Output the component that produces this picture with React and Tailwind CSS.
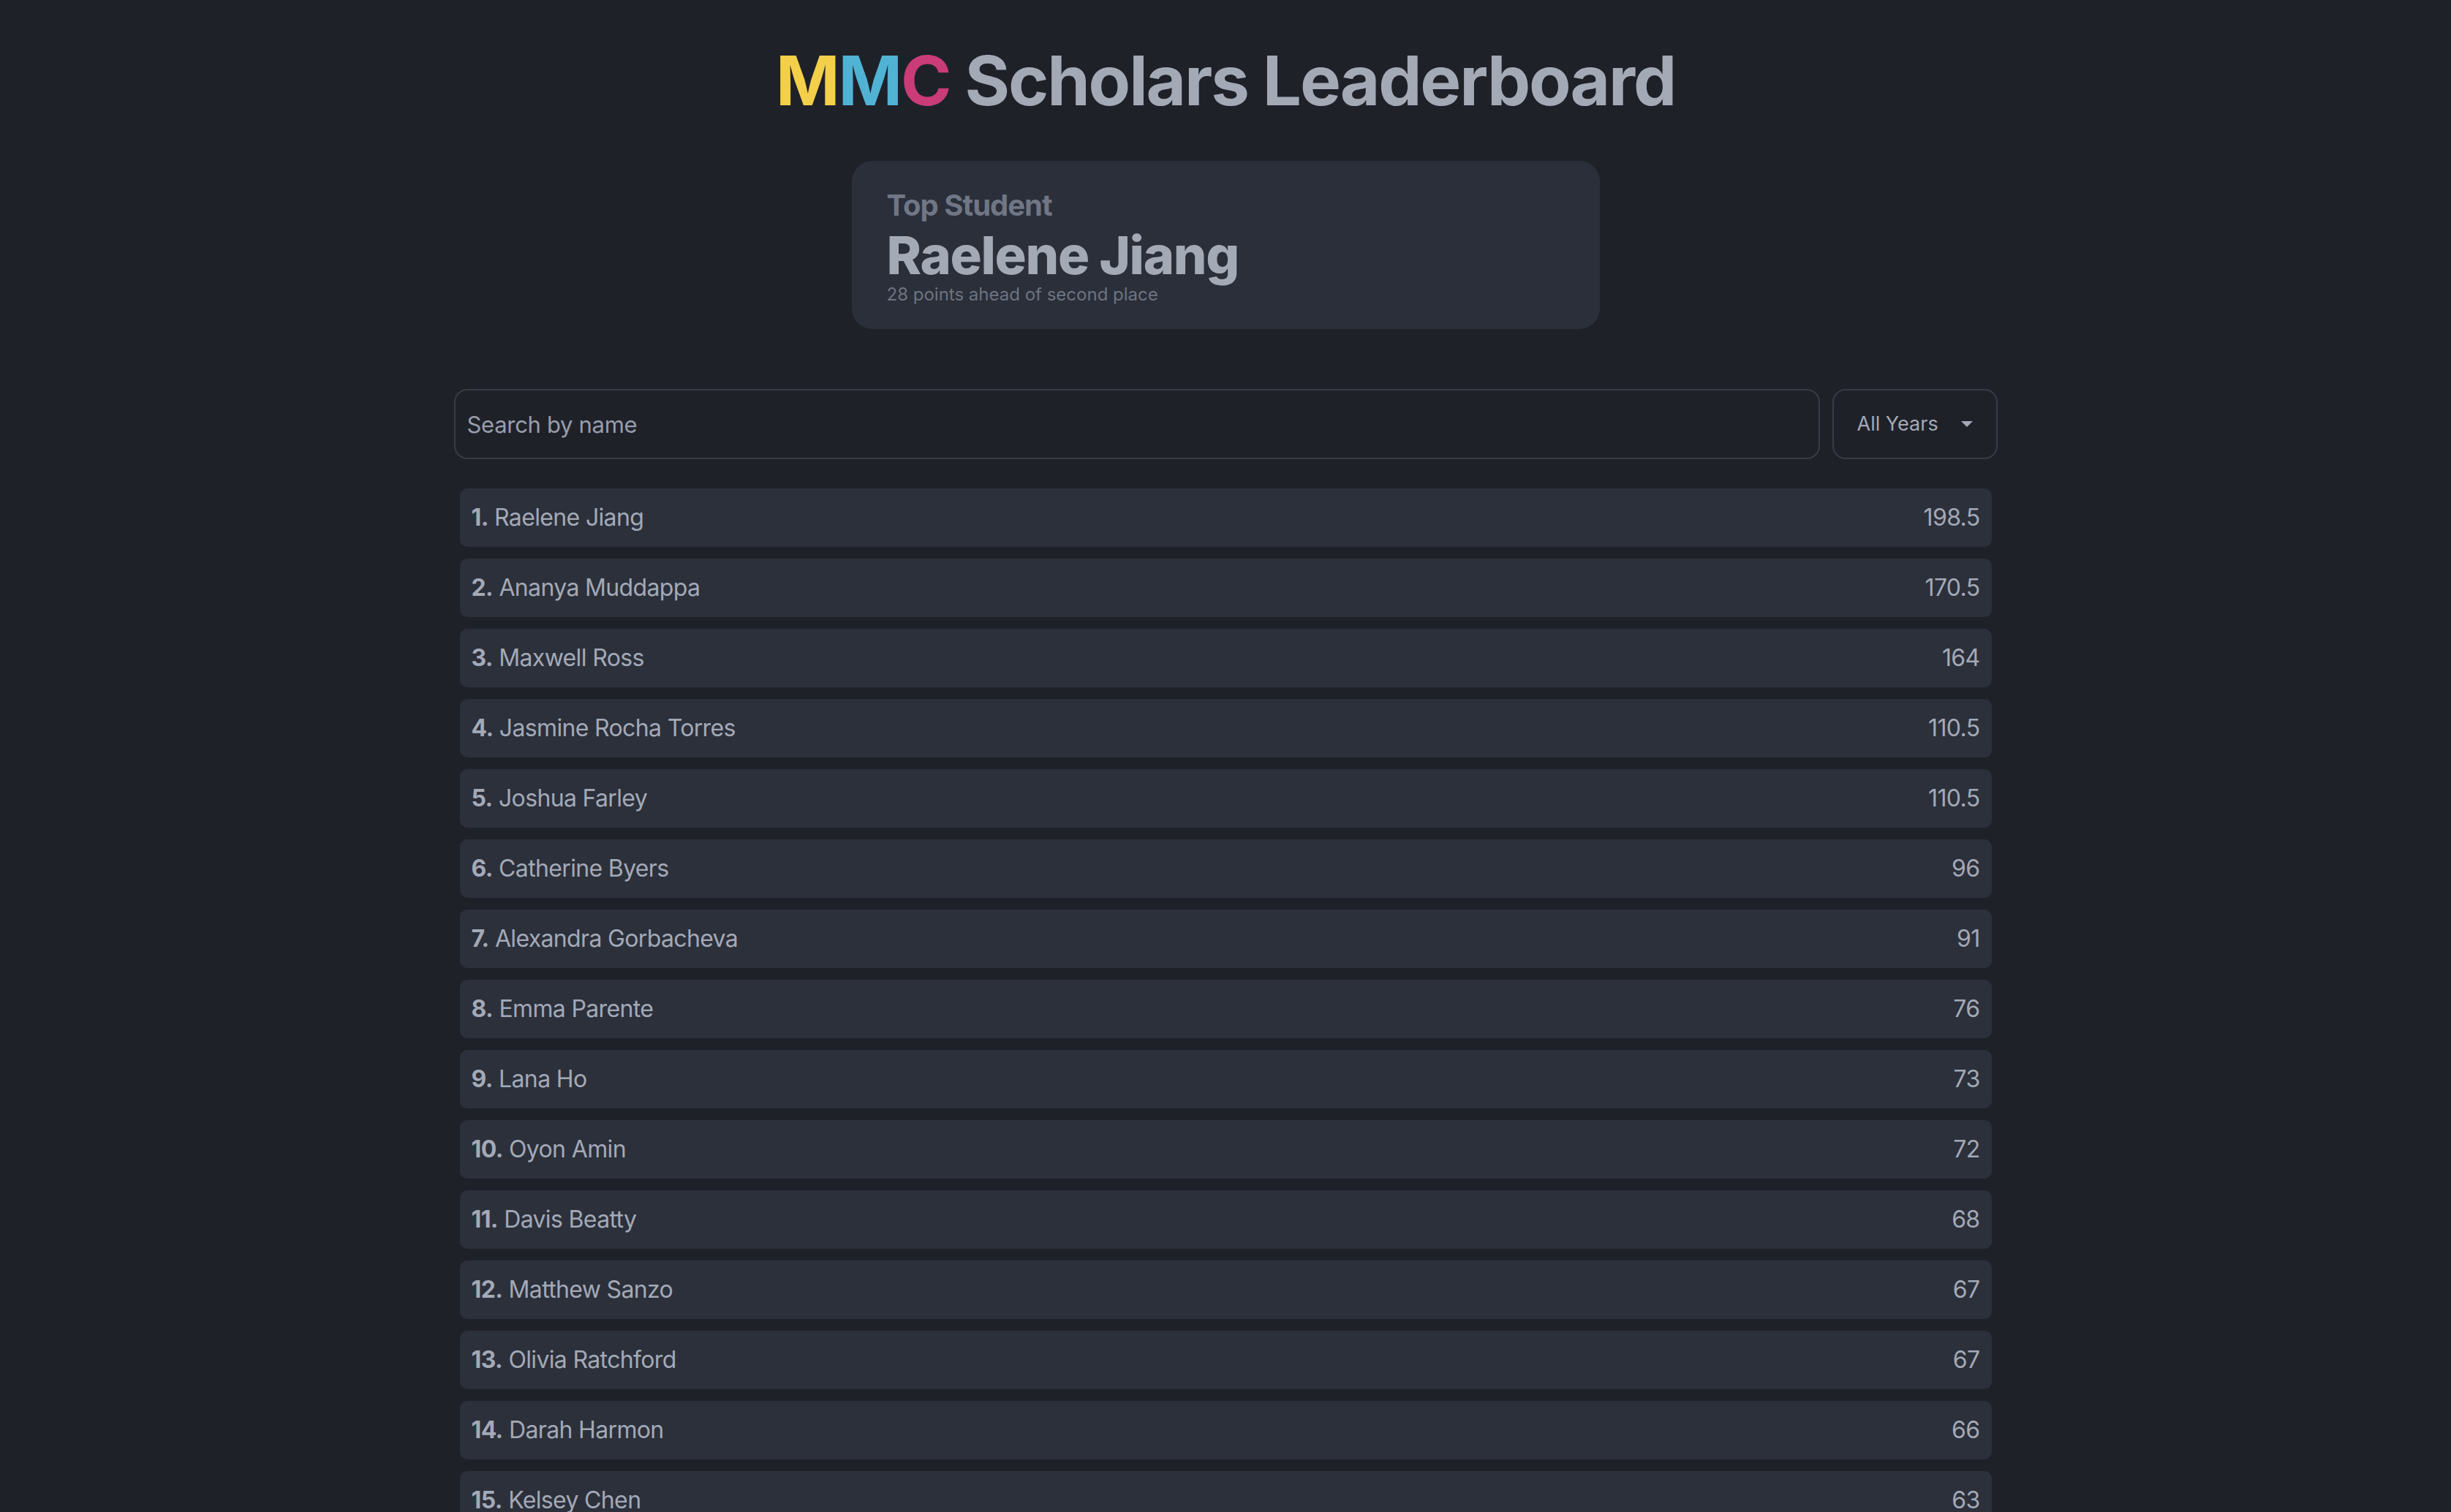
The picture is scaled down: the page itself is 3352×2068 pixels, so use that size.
import { useState } from "react";

const STUDENTS = [
  { name: "Raelene Jiang", points: "198.5" },
  { name: "Ananya Muddappa", points: "170.5" },
  { name: "Maxwell Ross", points: "164" },
  { name: "Jasmine Rocha Torres", points: "110.5" },
  { name: "Joshua Farley", points: "110.5" },
  { name: "Catherine Byers", points: "96" },
  { name: "Alexandra Gorbacheva", points: "91" },
  { name: "Emma Parente", points: "76" },
  { name: "Lana Ho", points: "73" },
  { name: "Oyon Amin", points: "72" },
  { name: "Davis Beatty", points: "68" },
  { name: "Matthew Sanzo", points: "67" },
  { name: "Olivia Ratchford", points: "67" },
  { name: "Darah Harmon", points: "66" },
  { name: "Kelsey Chen", points: "63" },
];

export default function App() {
  const [search, setSearch] = useState("");

  const filtered = STUDENTS.map((s, i) => ({ ...s, rank: i + 1 })).filter((s) =>
    s.name.toLowerCase().includes(search.toLowerCase())
  );

  return (
    <div className="min-h-screen bg-[#1f2129] font-['Inter',sans-serif] text-[#a4a9b6]">
      <div className="mx-auto w-[2111px] pt-[63px]">
        {/* Title */}
        <h1 className="text-center text-[94px] font-bold leading-none tracking-[-2.1px]">
          <span className="text-[#f3cf4a]">M</span>
          <span className="text-[#50b3d4]">M</span>
          <span className="text-[#c93c78]">C</span> Scholars Leaderboard
        </h1>

        {/* Top student card */}
        <div className="mx-auto mt-[63px] w-[1023px] rounded-[28px] bg-[#2a2f3a] px-[48px] pt-[41px] pb-[35px]">
          <p className="text-[40px] font-bold leading-none tracking-[-1px] text-[#707684]">Top Student</p>
          <p className="mt-[12px] text-[72px] font-extrabold leading-none tracking-[-1.3px]">Raelene Jiang</p>
          <p className="mt-[6px] text-[24px] leading-none text-[#6e7380]">
            28 points ahead of second place
          </p>
        </div>

        {/* Search + filter */}
        <div className="mt-[82px] flex h-[96px] gap-[17px]">
          <input
            type="text"
            value={search}
            onChange={(e) => setSearch(e.target.value)}
            placeholder="Search by name"
            className="h-full flex-1 rounded-[18px] border-2 border-[#373b46] bg-transparent px-[16px] text-[31px] tracking-[-0.3px] text-[#a4a9b6] outline-none placeholder:text-[#989dab]"
          />
          <button className="flex h-full w-[226px] items-center justify-between rounded-[18px] border-2 border-[#373b46] pl-[32px] pr-[32px] text-[27px]">
            <span>All Years</span>
            <svg width="16" height="8" viewBox="0 0 16 8" className="fill-[#a4a9b6]">
              <polygon points="0,0 16,0 8,8" />
            </svg>
          </button>
        </div>

        {/* Leaderboard list */}
        <div className="mt-[40px] flex flex-col gap-4 px-[8px]">
          {filtered.map((s) => (
            <div
              key={s.rank}
              className="flex h-[80px] items-center justify-between rounded-[10px] bg-[#2b303b] px-4 text-[32px] tracking-[-0.65px]"
            >
              <span>
                <span className="font-bold">{s.rank}.</span> {s.name}
              </span>
              <span>{s.points}</span>
            </div>
          ))}
        </div>
      </div>
    </div>
  );
}
